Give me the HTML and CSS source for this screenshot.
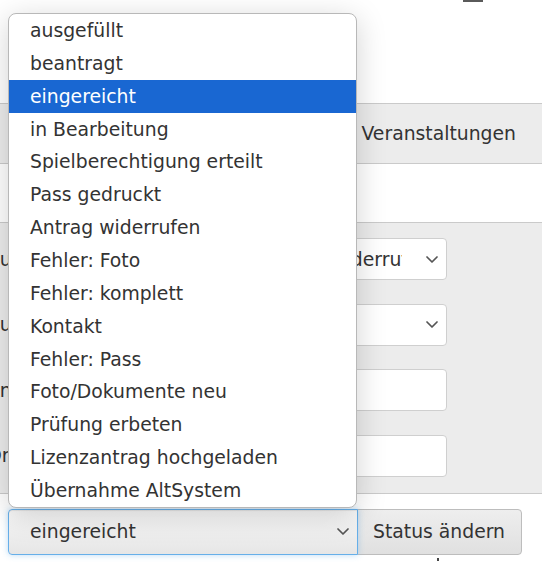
FILE: index.html
```html
<!DOCTYPE html>
<html lang="de">
<head>
<meta charset="utf-8">
<title>Antrag bearbeiten</title>
<link rel="stylesheet" href="styles.css">
</head>
<body>
<div class="page">
  <header class="topbar"><span class="user-mark"></span></header>

  <nav class="tabs">
    <span class="tab">Anträge</span>
    <span class="tab">Spieler</span>
    <span class="tab">Veranstaltungen</span>
  </nav>

  <div class="gap-area"></div>

  <section class="panel">
    <div class="row">
      <span class="label">Zuordnung</span>
      <div class="control">
        <span class="value">Antrag widerrufen</span>
        <svg class="chevron" viewBox="0 0 12 7" width="12" height="7"><path d="M1 1l5 5 5-5"/></svg>
      </div>
    </div>
    <div class="row">
      <span class="label">Zulassung</span>
      <div class="control">
        <span class="value"></span>
        <svg class="chevron" viewBox="0 0 12 7" width="12" height="7"><path d="M1 1l5 5 5-5"/></svg>
      </div>
    </div>
    <div class="row">
      <span class="label">Anmerkung</span>
      <div class="control input"></div>
    </div>
    <div class="row">
      <span class="label">Ort</span>
      <div class="control input"></div>
    </div>
  </section>

  <div class="actions">
    <div class="status-select">
      <span class="value">eingereicht</span>
      <svg class="chevron" viewBox="0 0 12 7" width="12" height="7"><path d="M1 1l5 5 5-5"/></svg>
    </div>
    <button class="status-button" type="button">Status ändern</button>
  </div>

  <div class="footer"><span class="footer-mark"></span></div>
</div>

<ul class="listbox">
  <li>ausgefüllt</li>
  <li>beantragt</li>
  <li class="selected">eingereicht</li>
  <li>in Bearbeitung</li>
  <li>Spielberechtigung erteilt</li>
  <li>Pass gedruckt</li>
  <li>Antrag widerrufen</li>
  <li>Fehler: Foto</li>
  <li>Fehler: komplett</li>
  <li>Kontakt</li>
  <li>Fehler: Pass</li>
  <li>Foto/Dokumente neu</li>
  <li>Prüfung erbeten</li>
  <li>Lizenzantrag hochgeladen</li>
  <li>Übernahme AltSystem</li>
</ul>
</body>
</html>
```

FILE: styles.css
```css
* {
  box-sizing: border-box;
}

html, body {
  margin: 0;
  padding: 0;
  background: #fff;
  overflow: hidden;
}

body {
  font-family: "DejaVu Sans", Verdana, sans-serif;
  font-size: 18.8px;
  color: #333;
  width: 542px;
  height: 562px;
  position: relative;
}

.page {
  width: 542px;
}

/* top strip */
.topbar {
  height: 103px;
  display: flex;
  justify-content: flex-end;
  padding-right: 59px;
}

.user-mark {
  display: block;
  width: 20px;
  height: 2px;
  background: #5a5a5a;
}

/* main navigation band */
.tabs {
  height: 61px;
  border-top: 1px solid #cacaca;
  border-bottom: 1px solid #cacaca;
  background: #ececec;
  display: flex;
  align-items: center;
  justify-content: flex-end;
  padding-right: 10px;
  white-space: nowrap;
}

.tab {
  padding: 0 16px;
  color: #333;
}

.gap-area {
  height: 58px;
}

/* filter panel */
.panel {
  background: #ececec;
  border-top: 1px solid #cacaca;
  border-bottom: 1px solid #cacaca;
  padding: 15px 95px 16px 0;
  display: flex;
  flex-direction: column;
  gap: 23.67px;
}

.row {
  display: grid;
  grid-template-columns: 1fr 199px;
  height: 42px;
  align-items: center;
}

.label {
  margin-left: -13px;
  color: #333;
  white-space: nowrap;
}

.control {
  height: 42px;
  background: #fff;
  border: 1px solid #cfcfcf;
  border-radius: 4px;
  display: flex;
  align-items: center;
  padding: 0 8px 0 12px;
}

.control .value {
  flex: 1;
  margin-right: 24px;
  overflow: hidden;
  white-space: nowrap;
  color: #333;
}

.chevron {
  flex: none;
  fill: none;
  stroke: #555;
  stroke-width: 1.7;
  stroke-linecap: round;
  stroke-linejoin: round;
}

/* status change bar */
.actions {
  display: flex;
  padding: 15px 0 0 8px;
}

.status-select {
  width: 350px;
  height: 46px;
  display: flex;
  align-items: center;
  padding: 0 8px 0 21px;
  border: 1px solid #66afe9;
  border-radius: 4px 0 0 4px;
  background: linear-gradient(#f9f9f9, #e6e6e6);
  box-shadow: inset 0 1px 1px rgba(0, 0, 0, .075), 0 0 6px rgba(102, 175, 233, .45);
  position: relative;
  z-index: 1;
}

.status-select .value {
  flex: 1;
  color: #333;
}

.status-button {
  width: 165px;
  height: 46px;
  margin-left: -1px;
  padding: 0 15px;
  font: inherit;
  color: #333;
  text-align: left;
  background: linear-gradient(#eeeeee, #e0e0e0);
  border: 1px solid #bdbdbd;
  border-radius: 0 4px 4px 0;
}

.footer {
  padding: 3px 0 0 437px;
}

.footer-mark {
  display: block;
  width: 2px;
  height: 3px;
  background: #444;
}

/* open options list of the status select */
.listbox {
  position: absolute;
  left: 8px;
  top: 13px;
  width: 349px;
  margin: 0;
  padding: 0;
  list-style: none;
  background: #fff;
  border: 1px solid #b8b8b8;
  border-radius: 8px;
  overflow: hidden;
  box-shadow: 0 6px 30px rgba(0, 0, 0, .18);
  z-index: 10;
}

.listbox li {
  height: 32.87px;
  padding-top: 2px;
  line-height: 30.87px;
  padding-left: 21px;
  color: #333;
  white-space: nowrap;
}

.listbox li.selected {
  background: #1967d2;
  color: #fff;
}
```
